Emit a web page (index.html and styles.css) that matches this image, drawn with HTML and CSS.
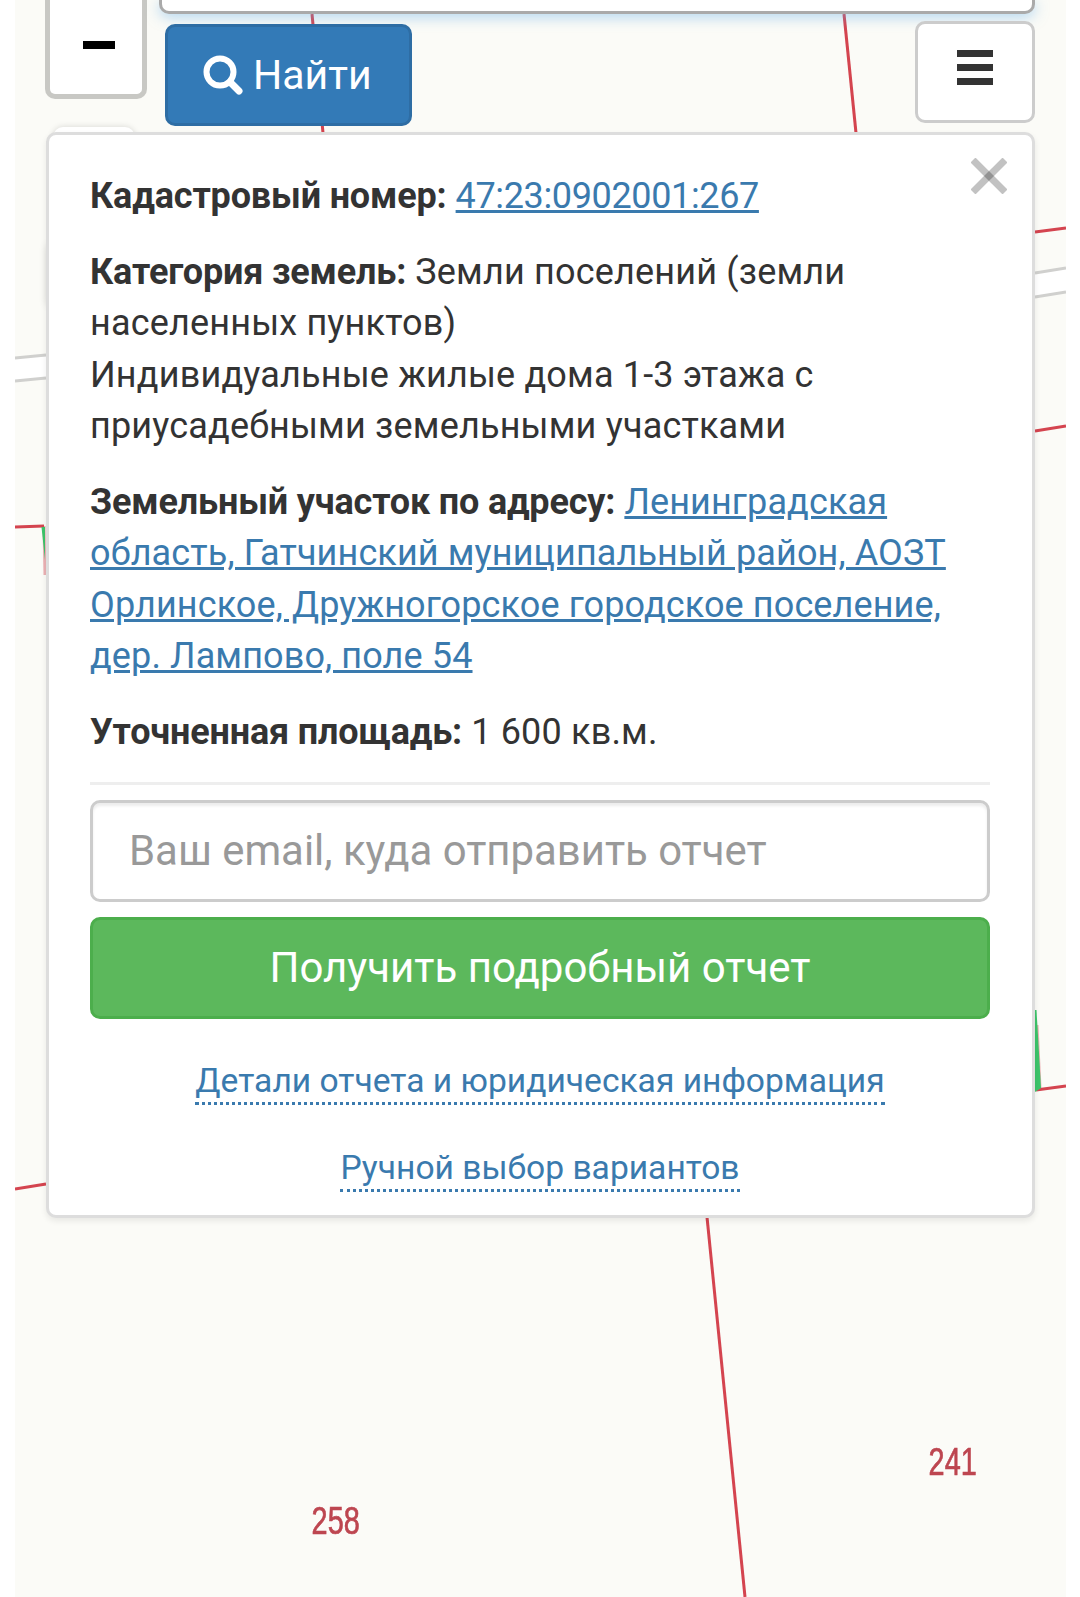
FILE: index.html
```html
<!DOCTYPE html>
<html lang="ru">
  <head>
    <meta charset="UTF-8" />
    <meta name="viewport" content="width=device-width, initial-scale=1.0" />
    <title>Кадастровая карта</title>
    <link rel="stylesheet" href="styles.css">
  </head>
  <body>
    <div class="map">
      <svg class="map-lines" width="1051" height="1597" viewBox="15 0 1051 1597">
        <path class="plot-road" d="M15 358 L46 355 L46 378 L15 381 Z" />
        <path class="plot-road" d="M1035 273 L1066 268 L1066 292 L1035 297 Z" />
        <g class="plot-red">
          <path d="M312 14 L323 133" />
          <path d="M844 14 L856 133" />
          <path d="M1035 232 L1066 228" />
          <path d="M1035 431 L1066 426" />
          <path d="M15 527 L44 526" />
          <path class="faint" d="M44 526 L45 575" />
          <path class="faint" d="M1037 1025 L1040 1088" />
          <path d="M1036 1090 L1066 1086" />
          <path d="M15 1189 L46 1184" />
          <path d="M707 1217 L745 1597" />
        </g>
        <g class="plot-grey">
          <path d="M1035 273 L1066 268" />
          <path d="M1035 297 L1066 292" />
          <path d="M15 358 L46 355" />
          <path d="M15 381 L46 378" />
        </g>
        <path class="plot-green" d="M41.5 527 L45 527 L45 560 Z" />
        <path class="plot-green" d="M1035 1010 L1036.5 1010 L1041 1088 L1035 1092 Z" />
      </svg>
      <span class="plot-label label-258">258</span>
      <span class="plot-label label-241">241</span>

      <div class="controls">
        <button class="zoom-btn"><span class="minus"></span></button>
        <div class="search-col">
          <div class="search-box"></div>
          <div class="search-row">
            <button class="find-btn">
              <svg width="40" height="40" viewBox="0 0 40 40">
                <circle cx="17" cy="17" r="13.5" fill="none" stroke="#fff" stroke-width="6" />
                <path d="M27 27 L36 36" stroke="#fff" stroke-width="7" stroke-linecap="round" />
              </svg>
              Найти
            </button>
            <button class="menu-btn">
              <span class="bar"></span>
              <span class="bar"></span>
              <span class="bar"></span>
            </button>
          </div>
        </div>
        <div class="hidden-btn"></div>
        <div class="hidden-tab"></div>
      </div>

      <div class="panel">
        <svg class="close" width="36" height="36" viewBox="0 0 36 36">
          <path d="M2 2 L34 34" />
          <path d="M34 2 L2 34" />
        </svg>
        <p><b>Кадастровый номер:</b> <a class="cad-link" href="#">47:23:0902001:267</a></p>
        <p>
          <b>Категория земель:</b> Земли поселений (земли населенных пунктов)<br />
          Индивидуальные жилые дома 1-3 этажа с приусадебными земельными участками
        </p>
        <p>
          <b>Земельный участок по адресу:</b>
          <a href="#">Ленинградская область, Гатчинский муниципальный район, АОЗТ Орлинское, Дружногорское городское поселение, дер. Лампово, поле 54</a>
        </p>
        <p><b>Уточненная площадь:</b> 1 600 кв.м.</p>
        <hr class="divider" />
        <input class="email" type="text" placeholder="Ваш email, куда отправить отчет" />
        <button class="report-btn">Получить подробный отчет</button>
        <div class="extra"><a class="dotted" href="#">Детали отчета и юридическая информация</a></div>
        <div class="extra"><a class="dotted" href="#">Ручной выбор вариантов</a></div>
      </div>
    </div>
  </body>
</html>
```

FILE: styles.css
```css
* {
  box-sizing: border-box;
  font-family: Roboto, "Noto Sans", sans-serif;
}
body {
  margin: 0;
  background-color: #fff;
  color: #333;
  font-size: 36px;
  line-height: 51.3px;
}
.map {
  position: relative;
  width: 1051px;
  height: 1597px;
  margin-left: 15px;
  padding: 0 31px 0 30px;
  background-color: #fbfbf7;
  overflow: hidden;
}
.map-lines {
  position: absolute;
  left: 0;
  top: 0;
  filter: blur(0.5px);
}
.map-lines path {
  fill: none;
}
.map-lines .plot-road {
  fill: #fff;
}
.plot-red path {
  stroke: #d4444f;
  stroke-width: 3;
}
.plot-red .faint {
  stroke-opacity: 0.4;
}
.plot-grey path {
  stroke: #d0d0ce;
  stroke-width: 3;
}
.map-lines .plot-green {
  fill: #3cc46a;
}
.plot-label {
  position: absolute;
  font-family: "Liberation Sans", sans-serif;
  font-size: 38px;
  line-height: 40px;
  color: #bd4650;
  -webkit-text-stroke: 0.7px #bd4650;
  transform: scaleX(0.76);
  text-shadow: 0 0 5px #fff;
  filter: blur(0.5px);
}
.label-258 {
  left: 289px;
  top: 1501px;
}
.label-241 {
  left: 906px;
  top: 1442px;
}
.controls {
  position: relative;
  display: flex;
  gap: 12px;
  height: 132px;
}
.zoom-btn {
  display: flex;
  justify-content: center;
  flex: none;
  width: 102px;
  height: 99px;
  padding: 41px 0 0 5px;
  background-color: #fff;
  border: 5px solid #c8c8c4;
  border-top-width: 0;
  border-radius: 0 0 10px 10px;
}
.minus {
  width: 32px;
  height: 8px;
  background-color: #000;
}
.search-col {
  flex: 1;
}
.search-box {
  height: 14px;
  background-color: #fff;
  border: 3px solid #aaa;
  border-top: none;
  border-radius: 0 0 10px 10px;
  box-shadow: 0 3px 14px rgba(102, 175, 233, 0.5);
}
.search-row {
  display: flex;
  justify-content: space-between;
  align-items: flex-start;
  padding: 7px 0 0 6px;
}
.find-btn {
  display: flex;
  align-items: center;
  gap: 10px;
  width: 247px;
  height: 102px;
  margin-top: 3px;
  padding: 0 0 0 35px;
  background-color: #337ab7;
  border: 3px solid #2e6da4;
  border-radius: 10px;
  color: #fff;
  font-size: 41px;
}
.menu-btn {
  display: flex;
  flex-direction: column;
  align-items: center;
  gap: 7px;
  width: 120px;
  height: 102px;
  padding: 26px 0 0;
  background-color: #fff;
  border: 3px solid #ccc;
  border-radius: 10px;
}
.bar {
  width: 36px;
  height: 7px;
  background-color: #333;
}
.hidden-btn {
  position: absolute;
  left: 8px;
  top: 127px;
  width: 82px;
  height: 20px;
  background-color: #fff;
  border-radius: 12px;
  box-shadow: 0 0 6px rgba(0, 0, 0, 0.15);
}
.hidden-tab {
  position: absolute;
  left: 2px;
  top: 245px;
  width: 20px;
  height: 60px;
  box-shadow: 0 0 8px rgba(0, 0, 0, 0.14);
}
.panel {
  position: relative;
  margin-left: 1px;
  padding: 36px 42px 22px 41px;
  background-color: #fff;
  border: 3px solid #ddd;
  border-radius: 10px;
  box-shadow: 0 3px 6px rgba(0, 0, 0, 0.08);
}
.panel p {
  margin: 0 0 24.8px;
  letter-spacing: 0.18px;
}
.panel b {
  font-weight: 700;
  letter-spacing: -0.17px;
}
.panel a {
  color: #3a7aae;
  letter-spacing: 0.12px;
}
.panel .cad-link {
  letter-spacing: -0.36px;
}
.close {
  position: absolute;
  right: 25px;
  top: 23px;
}
.close path {
  stroke: #000;
  stroke-opacity: 0.24;
  stroke-width: 7;
}
.divider {
  height: 3px;
  margin: -1.2px 0 15px;
  background-color: #eee;
  border: none;
}
.email {
  display: block;
  width: 100%;
  height: 102px;
  padding: 0 36px;
  border: 3px solid #ccc;
  border-radius: 10px;
  box-shadow: inset 0 3px 3px rgba(0, 0, 0, 0.075);
  font-size: 41.9px;
}
.email::placeholder {
  color: #999;
  opacity: 1;
}
.report-btn {
  display: block;
  width: 100%;
  height: 102px;
  margin-top: 15px;
  background-color: #5cb85c;
  border: 3px solid #4cae4c;
  border-radius: 10px;
  color: #fff;
  font-size: 42px;
}
.extra {
  margin-top: 37px;
  text-align: center;
  font-size: 33.6px;
  line-height: 50px;
}
.panel .dotted {
  padding-bottom: 2px;
  border-bottom: 3px dotted #3a7aae;
  letter-spacing: 0;
  text-decoration: none;
}
```
